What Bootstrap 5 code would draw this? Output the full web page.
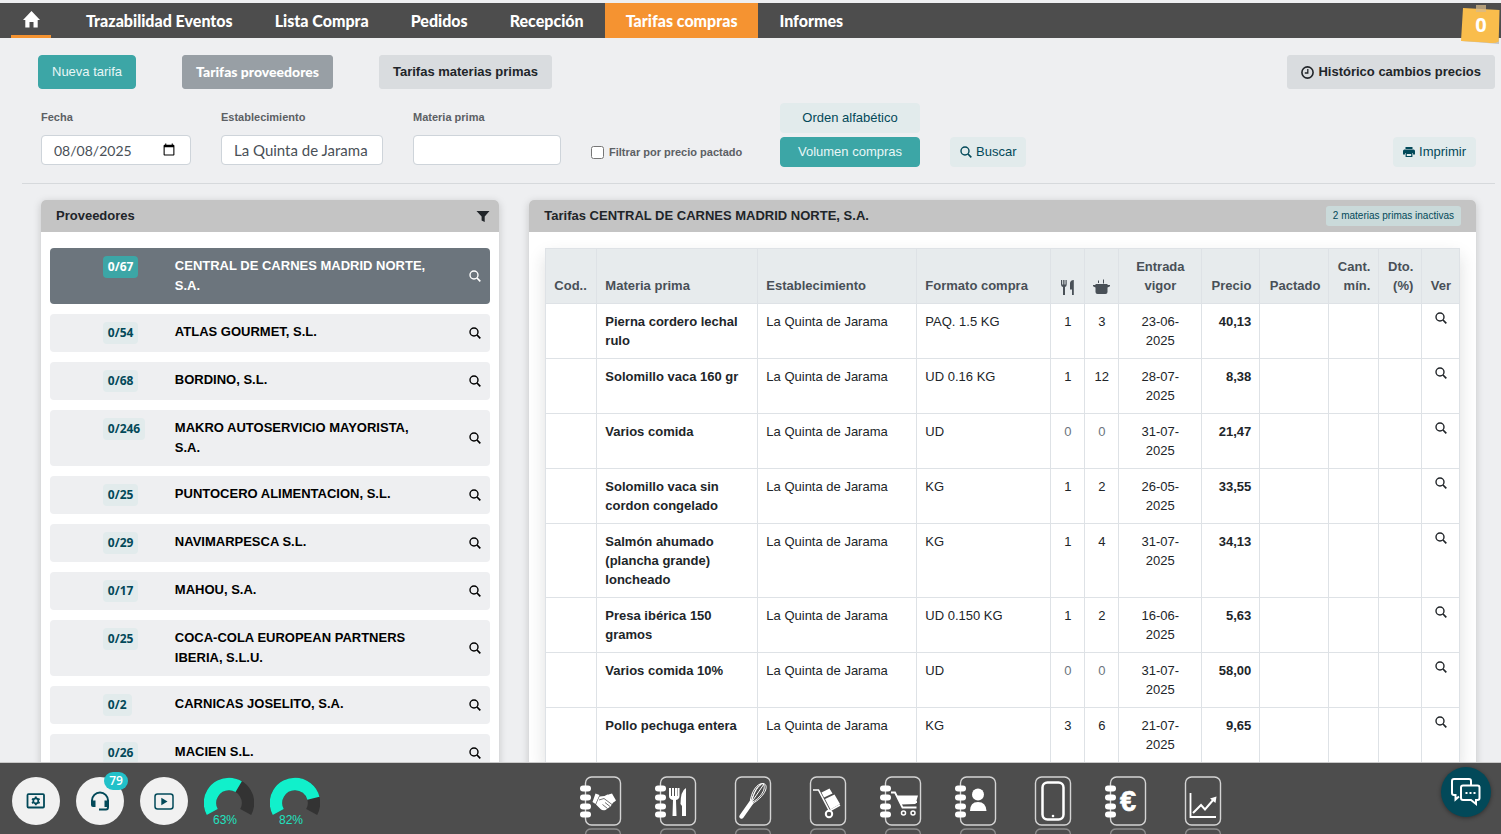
<!DOCTYPE html>
<html lang="es">
<head>
<meta charset="utf-8">
<meta name="viewport" content="width=device-width, initial-scale=1">
<title>Tarifas compras</title>
<link href="https://cdn.jsdelivr.net/npm/bootstrap@5.3.0/dist/css/bootstrap.min.css" rel="stylesheet">
<style>
:root{--petrol:#024959;--teal:#3ca6a6;--mist:#e2ebec;--ink:#212529}
body{font-family:"Liberation Sans",Arial,sans-serif;font-size:13px;line-height:20px;color:var(--ink);background:#eeeff1}
svg{display:block;flex:none}
.gothic{font-family:"Century Gothic",Lato,sans-serif}
/* top bar */
.topbar{background:#4d4d4d;margin-top:3px;height:35px;padding-left:11px}
.topbar a{display:flex;align-items:center;height:35px;padding:0 21px;color:#fff;font-size:16px;font-weight:900;text-decoration:none;white-space:nowrap}
.topbar a.home{width:40px;padding:0;margin-right:14px;justify-content:center;border-bottom:3px solid #f59331}
.topbar a.current{background:#f59331}
.note{top:3px;right:0}
/* buttons */
.btn{--bs-btn-font-size:13px;--bs-btn-line-height:20px;--bs-btn-padding-x:13px;--bs-btn-padding-y:6px;--bs-btn-border-radius:4px;white-space:nowrap}
.btn-teal{--bs-btn-bg:var(--teal);--bs-btn-color:#e9f6f6;--bs-btn-border-color:var(--teal)}
.btn-mist{--bs-btn-bg:var(--mist);--bs-btn-color:var(--petrol);--bs-btn-border-color:var(--mist)}
.btn-ash{--bs-btn-bg:#d9dcdf;--bs-btn-color:var(--ink);--bs-btn-border-color:#d9dcdf;--bs-btn-font-weight:700;--bs-btn-border-radius:3px}
.btn-slate{--bs-btn-bg:#989fa5;--bs-btn-color:#fff;--bs-btn-border-color:#989fa5;--bs-btn-font-weight:900;--bs-btn-border-radius:3px;--bs-btn-font-size:14px}
.btn-low{--bs-btn-padding-y:4px;--bs-btn-padding-x:9px}
.actions{padding:17px 6px 0 38px;gap:46px}
/* filters */
.filters{padding:14px 25px 16px 41px;gap:30px}
.rule{margin:0 6px 0 22px;border-top:1px solid #d6d9dc}
.field{padding-bottom:2px}
.field label{display:block;font-size:11px;font-weight:700;line-height:16px;color:#5c6064;margin-bottom:10px}
.field .form-control{height:30px;padding:0 12px;font-size:15px;border-color:#ced4da;border-radius:4px;color:#495057}
.field .form-control[type=date]{font-size:14px}
.w-date{width:150px}.w-place{width:162px}.w-item{width:148px}
.agreed{width:159px;height:30px;gap:5px;font-size:11px;font-weight:700;color:#5c6064;white-space:nowrap}
.agreed input{width:13px;height:13px;margin:0}
.sorting{width:140px;gap:4px}
/* panels */
.panels{padding:16px 25px 0 41px}
.panels .row{--bs-gutter-x:30px}
.panel{background:#fff;border-radius:5px 5px 0 0;box-shadow:0 2px 8px rgba(0,0,0,.18);min-height:100%}
.panel-top{background:#c4c4c4;height:32px;padding:0 15px;font-weight:700;border-radius:5px 5px 0 0}
.inactive{background:#cadada;color:var(--petrol);font-size:10px;line-height:20px;padding:0 7px;border-radius:3px;text-decoration:none}
.suppliers{padding:16px 9px;gap:10px}
.supplier{background:#eeeff1;color:#000;border-radius:4px;padding:8px 9px 8px 12%;text-decoration:none;font-weight:700}
.supplier .count-col{width:72px}
.supplier .count{display:inline-block;background:var(--mist);color:var(--petrol);font:700 12px/22px "Open Sans",sans-serif;padding:0 5px;border-radius:4px}
.supplier .title{width:69%}
.supplier.active{background:#6c757d;color:#fff}
.supplier.active .count{background:var(--teal);color:#fff}
.rates{padding:16px 16px 40px}
.rates table{table-layout:fixed;line-height:19px;margin:0;--bs-table-color:var(--ink);border-color:#dee2e6}
.rates td,.rates th{padding:8px}
.rates thead th{background:#e7ebed;color:#495057;vertical-align:bottom;border-top:0}
.rates tbody th{font-weight:700}
.rates .zero{color:#6c757d}
/* bottom bar */
.dock{background:#4d4d4d;border-top:1px solid #c9c9c9;height:72px;padding:0 10px 0 12px;gap:16px;overflow:hidden}
.round{width:48px;height:48px;border-radius:50%;background:#f1f1f1;color:var(--petrol);margin-top:14px}
.gauge{margin-top:14px}
.alerts{top:-5px;left:28px;min-width:24px;height:18px;border-radius:9px;background:#22c1c9;color:#fff;font:600 12px/18px "Open Sans",sans-serif;text-align:center}
.modules{margin-left:16.4%;gap:31px;margin-top:12px}
.modules a{color:#fff}
.chat{width:50px;height:50px;border-radius:50%;background:var(--petrol);color:#fff;margin-top:4px;box-shadow:0 1px 4px rgba(0,0,0,.4)}
</style>
</head>
<body class="vh-100 d-flex flex-column overflow-hidden">
<svg width="0" height="0" class="position-absolute" aria-hidden="true">
  <symbol id="lens" viewBox="0 0 12 12"><circle cx="5" cy="5" r="4" fill="none" stroke="currentColor" stroke-width="1.4"/><path d="M8 8l3.3 3.3" stroke="currentColor" stroke-width="1.7"/></symbol>
  <symbol id="page" viewBox="0 0 44 60"><rect x="6.500" y="2" width="35" height="48" rx="6" fill="none" stroke="#d4d4d4" stroke-width="1.400"/><path d="M6.500 60q0-6 6-6h23q6 0 6 6" fill="none" stroke="#8c8c8c" stroke-width="1.300"/></symbol>
  <symbol id="rings" viewBox="0 0 44 60"><g fill="#fff"><rect x="1" y="10.500" width="11" height="6" rx="3"/><rect x="1" y="19.500" width="11" height="6" rx="3"/><rect x="1" y="28.500" width="11" height="6" rx="3"/><rect x="1" y="36.500" width="11" height="6" rx="3"/></g></symbol>
</svg>

<header class="position-relative">
  <nav class="topbar gothic d-flex">
    <a class="home" href="#" aria-label="Inicio"><svg width="17" height="17" viewBox="0 0 17 17"><path fill="#fff" d="M8.500 0L17 9h-2.300v7.500h-4.200v-5.500h-4v5.500H2.300V9H0z"/></svg></a>
    <a href="#">Trazabilidad Eventos</a>
    <a href="#">Lista Compra</a>
    <a href="#">Pedidos</a>
    <a href="#">Recepción</a>
    <a class="current" href="#" aria-current="page">Tarifas compras</a>
    <a href="#">Informes</a>
  </nav>
  <svg class="note position-absolute" width="41" height="42" viewBox="0 0 41 42"><path d="M2 38l37 3V8z" fill="#000" opacity=".18"/><path d="M3 5l36.500 2-.8 31.500q-4 2.500-12 1L1 38z" fill="#f9bd4c"/><path d="M16 2h10v7H16z" fill="#d6b98a" opacity=".75"/><text x="21" y="29" text-anchor="middle" fill="#fff" font-family="Open Sans" font-weight="700" font-size="20">0</text></svg>
</header>

<main class="flex-grow-1 overflow-hidden">
  <div class="actions d-flex">
    <button class="btn btn-teal">Nueva tarifa</button>
    <button class="btn btn-slate gothic">Tarifas proveedores</button>
    <button class="btn btn-ash">Tarifas materias primas</button>
    <button class="btn btn-ash ms-auto d-flex align-items-center gap-1"><svg width="13" height="13" viewBox="0 0 13 13"><circle cx="6.500" cy="6.500" r="5.600" fill="none" stroke="currentColor" stroke-width="1.600"/><path d="M6.800 3v4H3.800" fill="none" stroke="currentColor" stroke-width="1.300"/></svg>Histórico cambios precios</button>
  </div>

  <form class="filters d-flex align-items-end" onsubmit="return false">
    <div class="field w-date"><label for="fecha">Fecha</label><input id="fecha" type="date" class="form-control gothic" value="2025-08-08"></div>
    <div class="field w-place"><label for="establecimiento">Establecimiento</label><input id="establecimiento" type="text" class="form-control gothic" value="La Quinta de Jarama"></div>
    <div class="field w-item"><label for="materia">Materia prima</label><input id="materia" type="text" class="form-control gothic"></div>
    <label class="agreed d-flex align-items-center" for="pactado"><input id="pactado" type="checkbox">Filtrar por precio pactado</label>
    <div class="sorting d-flex flex-column">
      <button type="button" class="btn btn-mist btn-low">Orden alfabético</button>
      <button type="button" class="btn btn-teal btn-low">Volumen compras</button>
    </div>
    <button class="btn btn-mist btn-low d-flex align-items-center gap-1"><svg width="12" height="12"><use href="#lens"/></svg>Buscar</button>
    <button type="button" class="btn btn-mist btn-low ms-auto d-flex align-items-center gap-1"><svg width="12" height="12" viewBox="0 0 12 12"><path fill="currentColor" fill-rule="evenodd" d="M2.500 1h7v2h-7zM1.500 3.600h9q1.500 0 1.500 1.500V8.600h-2V7H2v1.600H0V5.100Q0 3.600 1.500 3.600zM2.600 7h6.800v4H2.600zM3.800 8v2h4.400V8z"/></svg>Imprimir</button>
  </form>
  <div class="rule"></div>

  <div class="panels">
    <div class="row">
      <section class="col-4">
        <div class="panel">
          <div class="panel-top d-flex align-items-center justify-content-between pe-2">Proveedores<svg width="16" height="13" viewBox="0 0 16 13"><path fill="currentColor" d="M1.500 1h13L9.700 6.500V12L6.600 10.500v-4z"/></svg></div>
          <div class="suppliers d-flex flex-column">
            <a href="#" class="supplier active d-flex"><span class="count-col"><span class="count">0/67</span></span><span class="title">CENTRAL DE CARNES MADRID NORTE, S.A.</span><svg class="ms-auto align-self-center" width="12" height="12"><use href="#lens"/></svg></a>
            <a href="#" class="supplier d-flex"><span class="count-col"><span class="count">0/54</span></span><span class="title">ATLAS GOURMET, S.L.</span><svg class="ms-auto align-self-center" width="12" height="12"><use href="#lens"/></svg></a>
            <a href="#" class="supplier d-flex"><span class="count-col"><span class="count">0/68</span></span><span class="title">BORDINO, S.L.</span><svg class="ms-auto align-self-center" width="12" height="12"><use href="#lens"/></svg></a>
            <a href="#" class="supplier d-flex"><span class="count-col"><span class="count">0/246</span></span><span class="title">MAKRO AUTOSERVICIO MAYORISTA, S.A.</span><svg class="ms-auto align-self-center" width="12" height="12"><use href="#lens"/></svg></a>
            <a href="#" class="supplier d-flex"><span class="count-col"><span class="count">0/25</span></span><span class="title">PUNTOCERO ALIMENTACION, S.L.</span><svg class="ms-auto align-self-center" width="12" height="12"><use href="#lens"/></svg></a>
            <a href="#" class="supplier d-flex"><span class="count-col"><span class="count">0/29</span></span><span class="title">NAVIMARPESCA S.L.</span><svg class="ms-auto align-self-center" width="12" height="12"><use href="#lens"/></svg></a>
            <a href="#" class="supplier d-flex"><span class="count-col"><span class="count">0/17</span></span><span class="title">MAHOU, S.A.</span><svg class="ms-auto align-self-center" width="12" height="12"><use href="#lens"/></svg></a>
            <a href="#" class="supplier d-flex"><span class="count-col"><span class="count">0/25</span></span><span class="title">COCA-COLA EUROPEAN PARTNERS IBERIA, S.L.U.</span><svg class="ms-auto align-self-center" width="12" height="12"><use href="#lens"/></svg></a>
            <a href="#" class="supplier d-flex"><span class="count-col"><span class="count">0/2</span></span><span class="title">CARNICAS JOSELITO, S.A.</span><svg class="ms-auto align-self-center" width="12" height="12"><use href="#lens"/></svg></a>
            <a href="#" class="supplier d-flex"><span class="count-col"><span class="count">0/26</span></span><span class="title">MACIEN S.L.</span><svg class="ms-auto align-self-center" width="12" height="12"><use href="#lens"/></svg></a>
          </div>
        </div>
      </section>

      <section class="col-8">
        <div class="panel">
          <div class="panel-top d-flex align-items-center justify-content-between">Tarifas CENTRAL DE CARNES MADRID NORTE, S.A.<a href="#" class="inactive fw-normal">2 materias primas inactivas</a></div>
          <div class="rates">
            <table class="table table-bordered shadow">
              <colgroup><col style="width:51px"><col style="width:161px"><col style="width:159px"><col style="width:134px"><col style="width:34px"><col style="width:34px"><col style="width:83px"><col style="width:58px"><col style="width:69px"><col style="width:50px"><col style="width:43px"><col style="width:38px"></colgroup>
              <thead>
                <tr><th>Cod..</th><th>Materia prima</th><th>Establecimiento</th><th>Formato compra</th>
                <th><svg width="17" height="16" viewBox="0 0 17 16"><path fill="currentColor" d="M2 1h1.200v4.500h1V1h1.300v4.500h1V1h1.200v4.500Q7.700 7.500 6 8v8H4V8Q2 7.500 2 5.500zM14.800 1v15h-1.800v-5.500h-2V4Q11.500 1 14.800 1z"/></svg></th>
                <th><svg width="17" height="16" viewBox="0 0 17 16"><path fill="currentColor" d="M2.500 5h12v8q0 2-2 2h-8q-2 0-2-2zM0 6h17v1.300l-2.500 1.200h-12L0 7.300z"/><path d="M5.500 1.500v2.500M10.500 .5v4" stroke="currentColor" stroke-width="1"/></svg></th>
                <th class="text-center">Entrada vigor</th><th class="text-end">Precio</th><th class="text-end">Pactado</th><th class="text-end">Cant. mín.</th><th class="text-end">Dto. (%)</th><th class="text-center">Ver</th></tr>
              </thead>
              <tbody>
                <tr><td></td><th>Pierna cordero lechal rulo</th><td>La Quinta de Jarama</td><td>PAQ. 1.5 KG</td><td class="text-center">1</td><td class="text-center">3</td><td class="text-center">23-06-<br>2025</td><td class="text-end fw-bold">40,13</td><td></td><td></td><td></td><td><svg class="mx-auto" width="12" height="12"><use href="#lens"/></svg></td></tr>
                <tr><td></td><th>Solomillo vaca 160 gr</th><td>La Quinta de Jarama</td><td>UD 0.16 KG</td><td class="text-center">1</td><td class="text-center">12</td><td class="text-center">28-07-<br>2025</td><td class="text-end fw-bold">8,38</td><td></td><td></td><td></td><td><svg class="mx-auto" width="12" height="12"><use href="#lens"/></svg></td></tr>
                <tr><td></td><th>Varios comida</th><td>La Quinta de Jarama</td><td>UD</td><td class="text-center zero">0</td><td class="text-center zero">0</td><td class="text-center">31-07-<br>2025</td><td class="text-end fw-bold">21,47</td><td></td><td></td><td></td><td><svg class="mx-auto" width="12" height="12"><use href="#lens"/></svg></td></tr>
                <tr><td></td><th>Solomillo vaca sin cordon congelado</th><td>La Quinta de Jarama</td><td>KG</td><td class="text-center">1</td><td class="text-center">2</td><td class="text-center">26-05-<br>2025</td><td class="text-end fw-bold">33,55</td><td></td><td></td><td></td><td><svg class="mx-auto" width="12" height="12"><use href="#lens"/></svg></td></tr>
                <tr><td></td><th>Salmón ahumado (plancha grande) loncheado</th><td>La Quinta de Jarama</td><td>KG</td><td class="text-center">1</td><td class="text-center">4</td><td class="text-center">31-07-<br>2025</td><td class="text-end fw-bold">34,13</td><td></td><td></td><td></td><td><svg class="mx-auto" width="12" height="12"><use href="#lens"/></svg></td></tr>
                <tr><td></td><th>Presa ibérica 150 gramos</th><td>La Quinta de Jarama</td><td>UD 0.150 KG</td><td class="text-center">1</td><td class="text-center">2</td><td class="text-center">16-06-<br>2025</td><td class="text-end fw-bold">5,63</td><td></td><td></td><td></td><td><svg class="mx-auto" width="12" height="12"><use href="#lens"/></svg></td></tr>
                <tr><td></td><th>Varios comida 10%</th><td>La Quinta de Jarama</td><td>UD</td><td class="text-center zero">0</td><td class="text-center zero">0</td><td class="text-center">31-07-<br>2025</td><td class="text-end fw-bold">58,00</td><td></td><td></td><td></td><td><svg class="mx-auto" width="12" height="12"><use href="#lens"/></svg></td></tr>
                <tr><td></td><th>Pollo pechuga entera</th><td>La Quinta de Jarama</td><td>KG</td><td class="text-center">3</td><td class="text-center">6</td><td class="text-center">21-07-<br>2025</td><td class="text-end fw-bold">9,65</td><td></td><td></td><td></td><td><svg class="mx-auto" width="12" height="12"><use href="#lens"/></svg></td></tr>
              </tbody>
            </table>
          </div>
        </div>
      </section>
    </div>
  </div>
</main>

<footer class="dock d-flex flex-shrink-0 align-items-start">
  <button class="round btn p-0 border-0 d-flex align-items-center justify-content-center" aria-label="Configuración"><svg width="20" height="16" viewBox="0 0 20 16" fill="none" stroke="currentColor"><rect x="1.500" y="1.200" width="16.500" height="13.300" rx="1" stroke-width="1.800"/><circle cx="9.800" cy="7.900" r="2.500" stroke-width="1.700"/><path d="M9.800 3.500v1.500M9.800 10.800v1.500M6 5.700l1.300.8M12.300 9.300l1.300.8M6 10.100l1.300-.8M12.300 6.500l1.300-.8" stroke-width="1.900"/></svg></button>
  <button class="round btn p-0 border-0 position-relative d-flex align-items-center justify-content-center" aria-label="Soporte"><svg width="20" height="20" viewBox="0 0 20 20" fill="none" stroke="currentColor" stroke-width="2"><path d="M2 14V9.500a8 8 0 0 1 16 0V16q0 2.500-2 2.500h-7"/><path fill="currentColor" stroke="none" d="M1 9.500h4.500V16H3q-2 0-2-2zM14.500 9.500H19V15l-2 1h-2.500z"/></svg><span class="alerts position-absolute">79</span></button>
  <button class="round btn p-0 border-0 d-flex align-items-center justify-content-center" aria-label="Vídeos"><svg width="20" height="17" viewBox="0 0 20 17"><rect x="1" y="1" width="18" height="15" rx="2.500" fill="none" stroke="currentColor" stroke-width="1.500"/><path d="M7.300 4.800v7.400l6.200-3.700z" fill="currentColor"/></svg></button>
  <svg class="gauge" width="50" height="50" viewBox="0 0 50 50"><g fill="none" stroke-width="12.500"><path d="M8.300 35a19 19 0 1 1 33.400 0" stroke="#333" /><path d="M8.300 35a19 19 0 1 1 33.400 0" stroke="#11f0cb" pathLength="100" stroke-dasharray="63 100"/></g><text x="21" y="47" text-anchor="middle" font-size="12" fill="#1fe3c0">63%</text></svg>
  <svg class="gauge" width="50" height="50" viewBox="0 0 50 50"><g fill="none" stroke-width="12.500"><path d="M8.300 35a19 19 0 1 1 33.400 0" stroke="#333" /><path d="M8.300 35a19 19 0 1 1 33.400 0" stroke="#11f0cb" pathLength="100" stroke-dasharray="82 100"/></g><text x="21" y="47" text-anchor="middle" font-size="12" fill="#1fe3c0">82%</text></svg>

  <nav class="modules d-flex">
    <a href="#" aria-label="Proveedores"><svg width="44" height="60" viewBox="0 0 44 60"><use href="#page"/><use href="#rings"/><path fill="#fff" d="M16.500 18.500l4 1.500-4 9-3-2zM33 18.500l4 7-2.500 2-5-8zM20.500 21.500l5-.5 3-1.500 2.500.5 3.500 7-3 4.500-5 3.500q-3 1-5-1l-4.500-4.500z"/><path d="M20 25l5-1.500 8 6M23.500 29.500l5 4M26 27.500l5 4" stroke="#4d4d4d" stroke-width=".8" fill="none"/></svg></a>
    <a href="#" aria-label="Carta"><svg width="44" height="60" viewBox="0 0 44 60"><use href="#page"/><use href="#rings"/><path fill="#fff" d="M15 13h2v8h1v-8h2v8h1v-8h2v8h.500v-8H25.500v8q0 3-3.500 4l.5 16h-4l.5-16q-4-1-4-4zM32 13v28h-4V31l-1.500-2q0-13 5.500-16z"/></svg></a>
    <a href="#" aria-label="Recetas"><svg width="44" height="60" viewBox="0 0 44 60"><use href="#page"/><path d="M12.500 41.500L22 28" stroke="#fff" stroke-width="4.500" stroke-linecap="round"/><g fill="none" stroke="#fff" stroke-width="1"><path d="M21 28C22 17 28 8 34 8.500S38 20 23 29"/><path d="M22 28C25 16 30 10 34 8.500C38 13 32 23 22 28M22 28L35 9M22 28C24 20 27 12 32 9"/></g></svg></a>
    <a href="#" aria-label="Almacén"><svg width="44" height="60" viewBox="0 0 44 60"><use href="#page"/><path d="M9 15h5.500l11 21L36 30" fill="none" stroke="#fff" stroke-width="1.600"/><circle cx="25" cy="39" r="3.200" fill="none" stroke="#fff" stroke-width="2"/><path fill="#fff" d="M17.500 17.500l8-4 3 5-8.500 4zM21 24l9.500-4.500 5.500 9.500-9.500 5.500z"/></svg></a>
    <a href="#" aria-label="Compras"><svg width="44" height="60" viewBox="0 0 44 60"><use href="#page"/><use href="#rings"/><path d="M12 17.500h4l7.500 15h14M21 28l17-1" fill="none" stroke="#fff" stroke-width="1.800"/><path fill="#fff" d="M18 20.500h21L36.500 29l-14.500.5z"/><circle cx="24.500" cy="38" r="2" fill="none" stroke="#fff" stroke-width="1.500"/><circle cx="34" cy="38" r="2" fill="none" stroke="#fff" stroke-width="1.500"/></svg></a>
    <a href="#" aria-label="Personal"><svg width="44" height="60" viewBox="0 0 44 60"><use href="#page"/><use href="#rings"/><circle cx="24" cy="19.500" r="6" fill="#fff"/><path fill="#fff" d="M16 36q0-9 8-9t8.500 9z"/></svg></a>
    <a href="#" aria-label="Móvil"><svg width="44" height="60" viewBox="0 0 44 60"><use href="#page"/><rect x="13.500" y="7.500" width="21" height="37" rx="5" fill="none" stroke="#fff" stroke-width="2.500"/><circle cx="24" cy="41" r="1.300" fill="#fff"/></svg></a>
    <a href="#" aria-label="Finanzas"><svg width="44" height="60" viewBox="0 0 44 60"><use href="#page"/><use href="#rings"/><text x="24" y="36" text-anchor="middle" fill="#fff" stroke="#fff" stroke-width=".6" font-family="Liberation Sans" font-weight="700" font-size="29">€</text></svg></a>
    <a href="#" aria-label="Estadísticas"><svg width="44" height="60" viewBox="0 0 44 60"><use href="#page"/><path d="M11.500 18v24H37" fill="none" stroke="#fff" stroke-width="1.800"/><path d="M14 38l8-8 4 4.500L35 24" fill="none" stroke="#fff" stroke-width="2"/><path d="M37.500 21.500l-1 6.500-5.500-4.500z" fill="#fff"/></svg></a>
  </nav>

  <button class="chat btn p-0 border-0 ms-auto d-flex align-items-center justify-content-center" aria-label="Chat"><svg width="32" height="30" viewBox="0 0 32 30" fill="none" stroke="#fff" stroke-width="2"><path d="M9 19.500l-3.500 3V18H4q-2 0-2-2V4q0-2 2-2h15q2 0 2 2v4"/><path d="M13 8.500h14.500q2 0 2 2v10.500q0 2-2 2h-1.500v4l-5-4h-8q-2 0-2-2V10.500q0-2 2-2z"/><path d="M15.500 16h2M19.500 16h2M23.500 16h2"/></svg></button>
</footer>
<script src="https://cdn.jsdelivr.net/npm/bootstrap@5.3.0/dist/js/bootstrap.bundle.min.js"></script>
</body>
</html>
